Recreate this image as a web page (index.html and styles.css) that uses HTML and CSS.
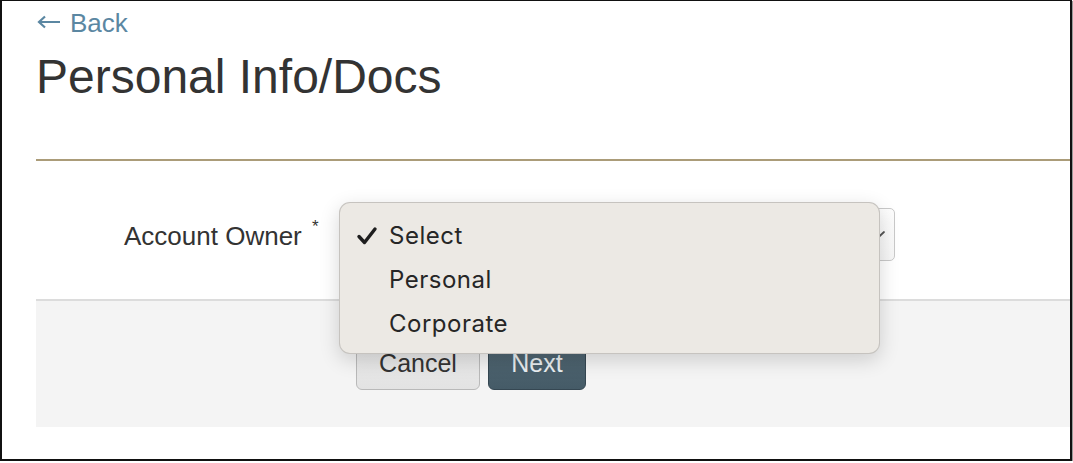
FILE: index.html
```html
<!DOCTYPE html>
<html lang="en">
<head>
<meta charset="utf-8">
<title>Personal Info/Docs</title>
<link rel="stylesheet" href="styles.css">
</head>
<body>
<div class="frame">
  <a class="back" href="#"><svg class="arrow" width="24" height="14" viewBox="0 0 24 14"><path d="M23 7 H2 M8 1.5 L2 7 L8 12.5" fill="none" stroke="#5b87a2" stroke-width="2.2" stroke-linecap="butt" stroke-linejoin="miter"/></svg>Back</a>
  <h1 class="title">Personal Info/Docs</h1>
  <div class="rule"></div>
  <div class="form-row">
    <label class="label">Account Owner <sup class="req">*</sup></label>
    <div class="field">
      <div class="select">
        <svg class="chev" width="18" height="12" viewBox="0 0 18 12"><path d="M2 3 L9 9.5 L16 3" fill="none" stroke="#555" stroke-width="1.8" stroke-linecap="round" stroke-linejoin="round"/></svg>
      </div>
      <ul class="menu">
        <li class="opt"><svg class="check" width="22" height="20" viewBox="0 0 22 20"><path d="M3 10.5 L8.5 16.5 L19 3" fill="none" stroke="#1e1e1e" stroke-width="3.4" stroke-linecap="round" stroke-linejoin="round"/></svg><span>Select</span></li>
        <li class="opt"><span>Personal</span></li>
        <li class="opt"><span>Corporate</span></li>
      </ul>
    </div>
  </div>
  <div class="actions">
    <button class="btn btn-cancel">Cancel</button>
    <button class="btn btn-next">Next</button>
  </div>
</div>
</body>
</html>
```
FILE: styles.css
```css
html, body {
  margin: 0;
  padding: 0;
  background: #fff;
}
body {
  font-family: "Liberation Sans", Arial, Helvetica, sans-serif;
  color: #333;
}
.frame {
  box-sizing: border-box;
  width: 1072px;
  height: 461px;
  border: 2px solid #111;
  border-top-width: 1px;
  box-shadow: 1px 1px 0 #9a9a9a;
  padding: 7px 0 0 34px;
  overflow: hidden;
}
.back {
  display: flex;
  align-items: center;
  gap: 9px;
  font-size: 26px;
  line-height: 30px;
  color: #5b87a2;
  text-decoration: none;
}
.arrow {
  margin-left: 1px;
  margin-top: -2px;
}
.title {
  margin: 13px 0 0;
  font-weight: normal;
  font-size: 48px;
  line-height: 52px;
  color: #333;
}
.rule {
  margin-top: 56px;
  height: 2px;
  background: #ab9c79;
}
.form-row {
  display: flex;
  align-items: center;
  padding: 47px 0 38px 88px;
}
.label {
  width: 216px;
  font-size: 26px;
  line-height: 30px;
  color: #333;
  padding-bottom: 4px;
}
.req {
  font-size: 17px;
  position: relative;
  top: -3px;
  margin-left: 3px;
}
.field {
  position: relative;
}
.select {
  box-sizing: border-box;
  width: 555px;
  height: 53px;
  border: 1px solid #c9c9c9;
  border-radius: 5px;
  background: linear-gradient(#fdfdfd, #f6f6f6);
  display: flex;
  align-items: center;
  justify-content: flex-end;
  padding-right: 8px;
}
.menu {
  position: absolute;
  top: -6px;
  left: -1px;
  box-sizing: border-box;
  width: 541px;
  height: 152px;
  margin: 0;
  padding: 10px 0 10px;
  list-style: none;
  background: #ece9e4;
  border: 1px solid rgba(0, 0, 0, 0.16);
  border-radius: 11px;
  box-shadow: 0 6px 20px rgba(0, 0, 0, 0.16);
  font-family: Inter, "Noto Sans", sans-serif;
  font-size: 24px;
  letter-spacing: 0.5px;
  color: #262626;
}
.opt {
  height: 44px;
  display: flex;
  align-items: center;
  padding-left: 49px;
  position: relative;
}
.check {
  position: absolute;
  left: 16px;
  top: 13px;
}
.actions {
  border-top: 2px solid #dcdcdc;
  background: #f4f4f4;
  height: 128px;
  box-sizing: border-box;
  padding: 35px 0 0 320px;
  display: flex;
  gap: 8px;
  align-items: flex-start;
}
.btn {
  box-sizing: border-box;
  font-family: "Liberation Sans", Arial, sans-serif;
  font-size: 25px;
  height: 54px;
  padding: 0;
  border-radius: 6px;
  cursor: pointer;
}
.btn-cancel {
  width: 124px;
  background: linear-gradient(#ececec, #e3e3e3);
  border: 1px solid #b9b9b9;
  color: #333;
}
.btn-next {
  width: 98px;
  background: linear-gradient(#536975, #455b67);
  border: 1px solid #354752;
  color: #e9eef0;
}
```
